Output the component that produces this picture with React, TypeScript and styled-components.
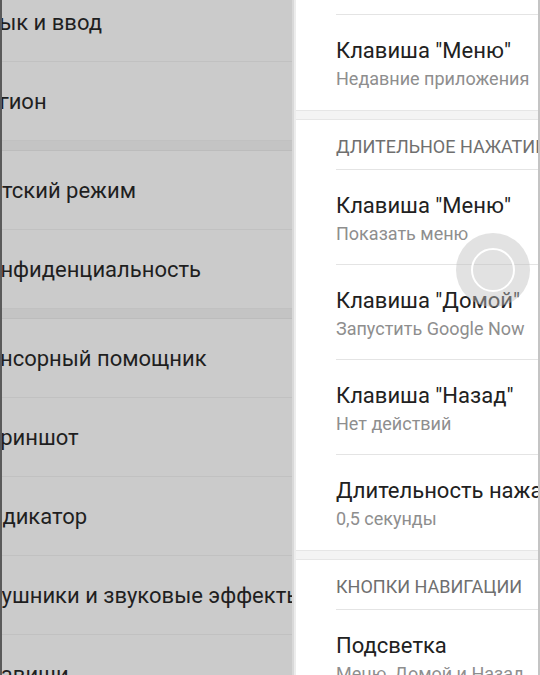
import * as React from 'react';
import styled, {createGlobalStyle} from 'styled-components';

const GlobalStyle = createGlobalStyle`
  html, body {
    margin: 0;
    padding: 0;
    background: #ffffff;
  }
  body {
    font-family: Roboto, "Noto Sans", "Liberation Sans", sans-serif;
  }
`;

const leftItems: Array<{title: string; sectionEnd?: boolean}> = [
    {title: 'Язык и ввод'},
    {title: 'Регион', sectionEnd: true},
    {title: 'Детский режим'},
    {title: 'Конфиденциальность', sectionEnd: true},
    {title: 'Сенсорный помощник'},
    {title: 'Скриншот'},
    {title: 'Индикатор'},
    {title: 'Наушники и звуковые эффекты'},
    {title: 'Клавиши'},
];

type Block =
    | {kind: 'item'; title: string; summary: string; last?: boolean}
    | {kind: 'header'; title: string}
    | {kind: 'gap'};

const rightBlocks: Block[] = [
    {kind: 'item', title: 'Клавиша "Домой"', summary: 'Запустить Google Now'},
    {kind: 'item', title: 'Клавиша "Меню"', summary: 'Недавние приложения', last: true},
    {kind: 'gap'},
    {kind: 'header', title: 'Длительное нажатие'},
    {kind: 'item', title: 'Клавиша "Меню"', summary: 'Показать меню'},
    {kind: 'item', title: 'Клавиша "Домой"', summary: 'Запустить Google Now'},
    {kind: 'item', title: 'Клавиша "Назад"', summary: 'Нет действий'},
    {kind: 'item', title: 'Длительность нажатия', summary: '0,5 секунды', last: true},
    {kind: 'gap'},
    {kind: 'header', title: 'Кнопки навигации'},
    {kind: 'item', title: 'Подсветка', summary: 'Меню, Домой и Назад'},
];

export default function App() {
    return <>
        <GlobalStyle/>
        <Screen>
            <SettingsPane>
                <SettingsList>
                    {leftItems.map((item, i) => <React.Fragment key={i}>
                        <SettingsRow>{item.title}</SettingsRow>
                        {item.sectionEnd && <PaneGap/>}
                    </React.Fragment>)}
                </SettingsList>
            </SettingsPane>
            <DetailPane>
                <DetailList>
                    {rightBlocks.map((block, i) => {
                        if (block.kind === 'gap') return <DetailGap key={i}/>;
                        if (block.kind === 'header') return <SectionHeader key={i}>{block.title}</SectionHeader>;
                        return <PrefRow key={i} $last={block.last}>
                            <PrefTitle>{block.title}</PrefTitle>
                            <PrefSummary>{block.summary}</PrefSummary>
                        </PrefRow>;
                    })}
                </DetailList>
                <EdgeLine/>
            </DetailPane>
            <TouchAssist>
                <TouchRing/>
            </TouchAssist>
        </Screen>
    </>;
}

const Screen = styled.div`
  position: relative;
  display: flex;
  width: 540px;
  height: 675px;
  overflow: hidden;
  background: #ffffff;
`;

const SettingsPane = styled.div`
  flex: 0 0 294px;
  height: 100%;
  overflow: hidden;
  background: #cbcbcb;
  border-left: 2px solid #5a5a5a;
  border-right: 2px solid #d9d9d9;
  box-sizing: border-box;
`;

const SettingsList = styled.div`
  display: flex;
  flex-direction: column;
  margin-top: -17px;
  margin-left: -28px;
  width: 360px;
`;

const SettingsRow = styled.div`
  display: flex;
  align-items: center;
  height: 79px;
  box-sizing: border-box;
  border-bottom: 1px solid #c1c1c1;
  font-size: 22px;
  color: #1f1f1f;
  white-space: nowrap;
`;

const PaneGap = styled.div`
  height: 9px;
  background: #c4c4c4;
  border-bottom: 1px solid #bcbcbc;
`;

const DetailPane = styled.div`
  position: relative;
  flex: 1 1 auto;
  height: 100%;
  overflow: hidden;
  background: #ffffff;
  border-left: 2px solid #ececec;
`;

const DetailList = styled.div`
  display: flex;
  flex-direction: column;
  margin-top: -80px;
  width: 330px;
`;

const PrefRow = styled.div<{$last?: boolean}>`
  display: flex;
  flex-direction: column;
  gap: 3px;
  height: 95px;
  box-sizing: border-box;
  padding: 22px 0 0 40px;
  white-space: nowrap;
  background: linear-gradient(#e4e4e4, #e4e4e4) no-repeat;
  background-size: ${p => p.$last ? '0 0' : 'calc(100% - 40px) 1px'};
  background-position: 40px 100%;
`;

const PrefTitle = styled.div`
  font-size: 22px;
  line-height: 28px;
  color: #212121;
`;

const PrefSummary = styled.div`
  font-size: 18px;
  line-height: 22px;
  color: #8e8e8e;
`;

const DetailGap = styled.div`
  height: 8px;
  background: #f4f4f4;
  border-top: 1px solid #e6e6e6;
  border-bottom: 1px solid #e6e6e6;
`;

const SectionHeader = styled.div`
  height: 50px;
  box-sizing: border-box;
  padding: 16px 0 0 40px;
  font-size: 18px;
  line-height: 22px;
  color: #6f6f6f;
  text-transform: uppercase;
  white-space: nowrap;
  background: linear-gradient(#e4e4e4, #e4e4e4) no-repeat;
  background-size: calc(100% - 40px) 1px;
  background-position: 40px 100%;
`;

const EdgeLine = styled.div`
  position: absolute;
  top: 0;
  right: 0;
  width: 2px;
  height: 100%;
  background: #c4c4c4;
`;

const TouchAssist = styled.div`
  position: absolute;
  left: 456px;
  top: 233px;
  width: 74px;
  height: 74px;
  border-radius: 50%;
  background: rgba(190, 190, 190, 0.45);
  display: flex;
  align-items: center;
  justify-content: center;
`;

const TouchRing = styled.div`
  width: 40px;
  height: 40px;
  border-radius: 50%;
  border: 2.5px solid #ffffff;
`;
